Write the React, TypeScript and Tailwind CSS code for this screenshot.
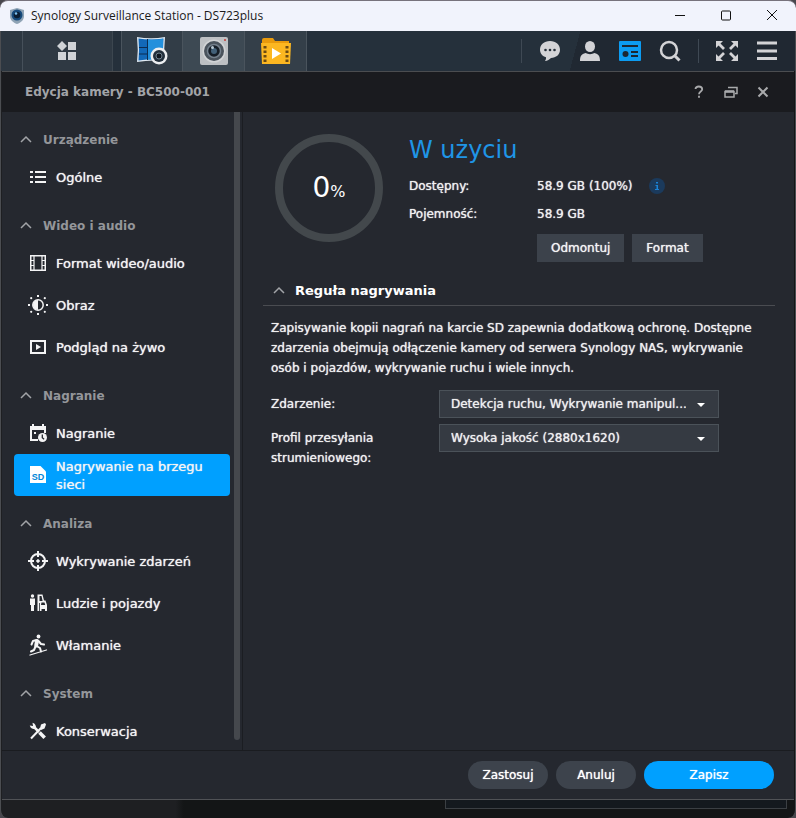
import React from "react";

type IconProps = { className?: string };

const svgProps = { width: 24, height: 24, viewBox: "0 0 24 24", fill: "none", "aria-hidden": true } as const;

function ListIcon() {
  return (
    <svg {...svgProps} fill="currentColor">
      <path d="M4 6h3v2H4zM4 11h3v2H4zM4 16h3v2H4zM9 6h11v2H9zM9 11h11v2H9zM9 16h11v2H9z" />
    </svg>
  );
}

function FilmIcon() {
  return (
    <svg {...svgProps} stroke="currentColor">
      <path d="M4.750 4.750h14.500v14.500H4.750z" strokeWidth="1.500" />
      <path d="M8 5v14M16 5v14M5 9.500h3M5 14.500h3M16 9.500h3M16 14.500h3" strokeWidth="1.200" />
    </svg>
  );
}

function BrightnessIcon() {
  return (
    <svg {...svgProps} fill="currentColor">
      <circle cx="12" cy="12" r="5.200" fill="none" stroke="currentColor" strokeWidth="1.500" />
      <path d="M12 7a5 5 0 0 0 0 10z" />
      <path d="M11 2h2v2h-2zM11 20h2v2h-2zM2 11h2v2H2zM20 11h2v2h-2z" />
      <circle cx="5.200" cy="5.200" r="1.100" />
      <circle cx="18.800" cy="5.200" r="1.100" />
      <circle cx="5.200" cy="18.800" r="1.100" />
      <circle cx="18.800" cy="18.800" r="1.100" />
    </svg>
  );
}

function LiveIcon() {
  return (
    <svg {...svgProps}>
      <path d="M5 6h14v12H5z" stroke="currentColor" strokeWidth="2" />
      <path d="M10 9l5 3-5 3z" fill="currentColor" />
    </svg>
  );
}

function CalendarIcon() {
  return (
    <svg {...svgProps}>
      <path d="M6 3h2v2h8V3h2v2h2v7h-2V9H6v9h6v2H4V5h2z" fill="currentColor" />
      <path d="M8 11h2v2H8z" fill="currentColor" />
      <circle cx="16.500" cy="16.500" r="4.500" fill="currentColor" />
      <path d="M16.300 13.500v3.200l1.800 1.600" stroke="#25282f" strokeWidth="1.300" />
    </svg>
  );
}

function SdIcon() {
  return (
    <svg {...svgProps}>
      <path d="M4 3h10.500L20 8.500V20H4z" fill="#fff" />
      <text x="12" y="17" textAnchor="middle" fontSize="9" fontWeight="700" fill="#0086d8" fontFamily="'Liberation Sans', sans-serif">
        SD
      </text>
    </svg>
  );
}

function TargetIcon() {
  return (
    <svg {...svgProps} stroke="currentColor" strokeWidth="2">
      <circle cx="12" cy="12" r="7" />
      <path d="M12 2v6M12 16v6M2 12h6M16 12h6" />
      <circle cx="12" cy="12" r="1.300" fill="currentColor" strokeWidth="1" />
    </svg>
  );
}

function PeopleIcon() {
  return (
    <svg {...svgProps} fill="currentColor">
      <circle cx="6.500" cy="5" r="1.700" />
      <path d="M4 7.500h5V14H8v6H5v-6H4z" />
      <path d="M11.500 20V3.500h5l1.500 6h-1.500l-1-4.500h-2v5h3v-.500h3l1.500 4.500v6h-2v-2h-3.500v2h-1.500v-8h-.800v8z" />
      <path d="M15.500 11.500h3l.700 2.500h-4.200z" fill="#25282f" />
    </svg>
  );
}

function IntrusionIcon() {
  return (
    <svg {...svgProps} stroke="currentColor" strokeLinecap="round" strokeLinejoin="round">
      <circle cx="12.500" cy="3.500" r="1.900" fill="currentColor" stroke="none" />
      <path d="M11 8l-.800 4.500" strokeWidth="4" />
      <path d="M10.500 7L7 8l-1.500 3.500M12.500 8l2.500 3 3 .500M10.500 13l3.500 2 1 3.500M9.500 13.500L8 17l-3 1.500" strokeWidth="2" />
      <path d="M4 22L20.500 17" strokeWidth="1.300" />
    </svg>
  );
}

function ToolsIcon() {
  return (
    <svg {...svgProps} stroke="currentColor">
      <path d="M5 19.500L15 9" strokeWidth="2" />
      <path d="M14 9.500l1-4L19 4l1 1.500-1.500 4L15 11z" fill="currentColor" stroke="none" />
      <path d="M8 8l5 5" strokeWidth="2.500" />
      <path d="M6.500 3.800l.500 3.200-3.200-.500A4 4 0 0 0 9.500 9.500 4 4 0 0 0 6.500 3.800z" fill="currentColor" stroke="none" />
      <path d="M13.500 13.500l5.200 5.200" strokeWidth="3.500" />
    </svg>
  );
}

function Chevron({ className }: IconProps) {
  return (
    <svg className={className} width="12" height="12" viewBox="0 0 12 12" fill="none" aria-hidden>
      <path d="M1 8l5-5 5 5" stroke="#a2a4a8" strokeWidth="1.500" />
    </svg>
  );
}

type Item = { label: string; icon: () => React.JSX.Element; active?: boolean };

const groups: { title: string; items: Item[] }[] = [
  { title: "Urządzenie", items: [{ label: "Ogólne", icon: ListIcon }] },
  {
    title: "Wideo i audio",
    items: [
      { label: "Format wideo/audio", icon: FilmIcon },
      { label: "Obraz", icon: BrightnessIcon },
      { label: "Podgląd na żywo", icon: LiveIcon },
    ],
  },
  {
    title: "Nagranie",
    items: [
      { label: "Nagranie", icon: CalendarIcon },
      { label: "Nagrywanie na brzegu sieci", icon: SdIcon, active: true },
    ],
  },
  {
    title: "Analiza",
    items: [
      { label: "Wykrywanie zdarzeń", icon: TargetIcon },
      { label: "Ludzie i pojazdy", icon: PeopleIcon },
      { label: "Włamanie", icon: IntrusionIcon },
    ],
  },
  { title: "System", items: [{ label: "Konserwacja", icon: ToolsIcon }] },
];

function WindowTitle() {
  const btn = "grid h-[30px] w-[46px] place-items-center";
  return (
    <header className="flex h-[31px] shrink-0 items-center rounded-t-lg border-t border-[#77727c] bg-[#f1f3fc] pr-px pl-2.5 font-['Open_Sans','Noto_Sans',sans-serif] text-xs text-[#1a1a1a]">
      <svg width="14" height="16" viewBox="0 0 14 16" aria-hidden>
        <path d="M7 0l7 2v6c0 4-3 6.500-7 8-4-1.500-7-4-7-8V2z" fill="#8fa3b5" />
        <circle cx="7" cy="7" r="5.500" fill="#174a7c" />
        <circle cx="7" cy="7" r="3.300" fill="#0b1d33" />
        <circle cx="6" cy="5.500" r="1.300" fill="#7cc0f0" />
      </svg>
      <h1 className="ml-[7px] flex-1">Synology Surveillance Station - DS723plus</h1>
      <div className="flex">
        <button type="button" aria-label="Minimalizuj" className={btn}>
          <svg width="12" height="12" viewBox="0 0 12 12"><path d="M1 5.500h10" stroke="#111" /></svg>
        </button>
        <button type="button" aria-label="Maksymalizuj" className={btn}>
          <svg width="12" height="12" viewBox="0 0 12 12"><rect x="1.500" y="1" width="9" height="9" rx="1" fill="none" stroke="#111" /></svg>
        </button>
        <button type="button" aria-label="Zamknij okno" className={btn}>
          <svg width="12" height="12" viewBox="0 0 12 12"><path d="M1 0l10 10M11 0L1 10" stroke="#111" /></svg>
        </button>
      </div>
    </header>
  );
}

function AppBar() {
  const right = "grid h-10 w-10 place-items-center";
  const app = "grid h-10 place-items-center border-r border-[#4a545d]";
  return (
    <div className="flex h-10 shrink-0 items-center bg-[linear-gradient(105deg,#25303b_72%,#202832_72%)]">
      <div className="h-10 w-[22px] border-r border-[#46505a] bg-[#2d3741]" />
      <button type="button" aria-label="Menu główne" className="mr-2 grid h-10 w-[90px] place-items-center border-r border-[#3c464f] bg-[#2f3943] pr-0.5">
        <svg width="20" height="20" viewBox="0 0 20 20" fill="#d0d3d7" aria-hidden>
          <path d="M5 0l5 5-5 5-5-5zM11 1h8v8h-8zM1 11h8v8H1zM11 11h8v8h-8z" />
        </svg>
      </button>
      <button type="button" aria-label="Centrum monitoringu" className={`${app} w-[62px] border-l bg-[#323d47]`}>
        <svg width="32" height="28" viewBox="0 0 32 28" aria-hidden>
          <path d="M1 0q14 2.500 28 0-1.500 12 0 24-14-1.500-28 1 1.500-12 0-25z" fill="#dfe9f2" />
          <path d="M2.500 1.500q12.500 2 25 0-1 10.500 0 21-12.500-1-25 1 1-11 0-22z" fill="#1268b8" />
          <path d="M12 2.500q8 .500 15-.800v20.500l-15 .300z" fill="#2390dc" />
          <path d="M11.500 2v21M3 10.500h8.500M3 17h8.500" stroke="#0b2c52" />
          <circle cx="23" cy="19" r="8.500" fill="#eceef0" />
          <circle cx="23" cy="19" r="6" fill="#23303c" />
          <circle cx="23" cy="19" r="3" fill="#0e161f" stroke="#70808c" />
        </svg>
      </button>
      <button type="button" aria-label="Kamera IP" className={`${app} w-[62px] bg-[#3d4953]`}>
        <svg width="28" height="30" viewBox="0 0 28 30" aria-hidden>
          <rect x="0" y="1" width="28" height="28" rx="2" fill="#bdc0c3" />
          <circle cx="14" cy="15" r="11.500" fill="#d2d4d6" />
          <circle cx="14" cy="15" r="10" fill="#4a535c" />
          <circle cx="14" cy="15" r="6.500" fill="#151d26" stroke="#74808c" strokeWidth="1.500" />
          <circle cx="14" cy="15" r="3" fill="#426078" />
          <circle cx="12.500" cy="11.500" r="1.500" fill="#b8c8d4" />
          <circle cx="25" cy="4" r="1" fill="#c43a35" />
        </svg>
      </button>
      <button type="button" aria-label="Nagrania" className={`${app} w-[62px] bg-[#343f49]`}>
        <svg width="30" height="28" viewBox="0 0 30 28" aria-hidden>
          <path d="M1 3q0-2 2-2h9l2 3h14v5H1z" fill="#e99a0c" />
          <path d="M0 6h30l-1 21H1z" fill="#fcb721" />
          <path d="M4 9v17M26 9v17" stroke="#6b4a12" strokeWidth="3" strokeDasharray="2.500 2" />
          <path d="M11 11l9 5.500-9 5.500z" fill="#fff" />
        </svg>
      </button>
      <div className="ml-auto flex items-center pr-2">
        <div className="mr-2 h-6 w-px bg-[#3f4954]" />
        <button type="button" aria-label="Czat" className={right}>
          <svg width="20" height="20" viewBox="0 0 20 20" aria-hidden>
            <path d="M10 0c6 0 10 3.800 10 8.700 0 5-4 8-9 8.300-1.500 1.600-3.500 2.800-6 3 .8-1 1.200-2.500 1-3.700C2.500 15 0 12.500 0 8.700 0 3.800 4 0 10 0z" fill="#d3d3d6" />
            <circle cx="5.500" cy="9" r="1.300" fill="#26303a" /><circle cx="10" cy="9" r="1.300" fill="#26303a" /><circle cx="14.500" cy="9" r="1.300" fill="#26303a" />
          </svg>
        </button>
        <button type="button" aria-label="Użytkownik" className={right}>
          <svg width="20" height="20" viewBox="0 0 20 20" fill="#d3d3d6" aria-hidden>
            <ellipse cx="10" cy="5.500" rx="5" ry="5.500" />
            <path d="M0 20c0-5 1.500-7 5.500-8 2.500 1.500 6.500 1.500 9 0 4 1 5.500 3 5.500 8z" />
          </svg>
        </button>
        <button type="button" aria-label="Widżety" className={right}>
          <svg width="22" height="20" viewBox="0 0 22 20" aria-hidden>
            <rect width="22" height="20" rx="1" fill="#0c9cf2" />
            <path d="M3 5h16M12 11h7M12 15h7" stroke="#1b2733" strokeWidth="2" />
            <circle cx="6.500" cy="13" r="3" fill="#1b2733" />
          </svg>
        </button>
        <button type="button" aria-label="Szukaj" className={right}>
          <svg width="22" height="22" viewBox="0 0 22 22" fill="none" stroke="#d3d3d6" aria-hidden>
            <circle cx="10" cy="10" r="8" strokeWidth="2.500" />
            <path d="M15.500 15.500l5 5" strokeWidth="3" />
          </svg>
        </button>
        <div className="mx-2 h-6 w-px bg-[#3f4954]" />
        <button type="button" aria-label="Pełny ekran" className={right}>
          <svg width="22" height="20" viewBox="0 0 22 20" aria-hidden>
            <g fill="#d3d3d6">
              <path d="M0 0h7L0 7zM22 0h-7l7 7zM0 20h7l-7-7zM22 20h-7l7-7z" />
            </g>
            <path d="M2 2l6 6M20 2l-6 6M2 18l6-6M20 18l-6-6" stroke="#d3d3d6" strokeWidth="2.800" />
          </svg>
        </button>
        <button type="button" aria-label="Opcje" className={right}>
          <svg width="20" height="20" viewBox="0 0 20 20" aria-hidden>
            <path d="M0 2h20M0 10h20M0 17.500h20" stroke="#d3d3d6" strokeWidth="3" />
          </svg>
        </button>
      </div>
    </div>
  );
}

function DialogHeader() {
  const btn = "grid h-8 w-8 place-items-center text-[#a9aaac]";
  return (
    <div className="flex h-10 shrink-0 items-center bg-[#1a1b1f] pr-[15px] pl-[23px]">
      <h2 className="flex-1 text-xs font-bold text-[#a2a4a8]">Edycja kamery - BC500-001</h2>
      <button type="button" aria-label="Pomoc" className={btn}>
        <svg width="10" height="14" viewBox="0 0 10 14" fill="none" stroke="currentColor" strokeWidth="1.800" aria-hidden>
          <path d="M1.500 4Q1.500 1.500 4.800 1.500T8.200 4.200C8.200 6.500 5 6.500 5 9.200M5 10.800v2" />
        </svg>
      </button>
      <button type="button" aria-label="Przywróć" className={btn}>
        <svg width="14" height="12" viewBox="0 0 14 12" fill="none" stroke="currentColor" aria-hidden>
          <path d="M4 1.500h9v6h-2" strokeWidth="1.500" />
          <path d="M1 5.500h9v5.500H1z" strokeWidth="1.500" />
          <path d="M1 5.500h9" strokeWidth="2.500" />
        </svg>
      </button>
      <button type="button" aria-label="Zamknij" className={btn}>
        <svg width="12" height="12" viewBox="0 0 12 12" aria-hidden>
          <path d="M1.500 1.500l9 9M10.500 1.500l-9 9" stroke="currentColor" strokeWidth="2" />
        </svg>
      </button>
    </div>
  );
}

function Sidebar() {
  return (
    <div className="flex w-[241px] shrink-0 border-r border-[#1b1d22] pr-0.5">
      <nav className="min-w-0 flex-1 overflow-y-auto pr-1 pl-3 [scrollbar-width:none]">
        {groups.map((group) => (
          <section key={group.title}>
            <h3 className="flex h-11 items-center pt-3 pl-1.5 text-xs font-bold text-[#94969a]">
              <Chevron className="mr-[11px]" />
              {group.title}
            </h3>
            <ul>
              {group.items.map(({ label, icon: Icon, active }) => (
                <li key={label}>
                  <a
                    href="#"
                    aria-current={active ? "page" : undefined}
                    className={`flex h-[42px] items-center gap-1.5 rounded-sm pl-3 text-[13px] leading-[18px] text-[#f4f4f5] ${active ? "bg-[#00a0ff]" : ""}`}
                  >
                    <span className="shrink-0"><Icon /></span>
                    <span className="pt-0.5 [text-shadow:0_0_1px_currentColor]">{label}</span>
                  </a>
                </li>
              ))}
            </ul>
          </section>
        ))}
      </nav>
      <div className="mb-2.5 w-1.5 rounded-b-full bg-[#45484d]" />
    </div>
  );
}

function SelectField({ id, label, options }: { id: string; label: string; options: string[] }) {
  return (
    <div className="flex items-start">
      <label htmlFor={id} className="w-[168px] shrink-0 pt-1 pr-12">{label}</label>
      <div className="relative w-[280px]">
        <select id={id} className="h-7 w-full appearance-none rounded-none border border-[#4b5259] bg-[#353a42] pr-8 pl-[11px] text-xs text-[#f0f0f1] [text-shadow:inherit]">
          {options.map((o) => <option key={o}>{o}</option>)}
        </select>
        <svg className="pointer-events-none absolute top-3 right-3.5" width="8" height="5" viewBox="0 0 8 5" aria-hidden>
          <path d="M0 1h8L4 5z" fill="#fff" />
        </svg>
      </div>
    </div>
  );
}

function Content() {
  const btn = "h-7 bg-[#3c424b] px-3.5 text-[#f4f4f5] [text-shadow:inherit]";
  return (
    <main className="min-w-0 flex-1 overflow-hidden pr-[19px] pl-5 text-xs leading-5 text-[#f0f0f1] [text-shadow:0_0_1px_currentColor]">
      <section className="flex gap-[26px] pt-[22px] pl-3">
        <div className="grid size-[108px] place-items-center rounded-full border-8 border-[#43484c]">
          <p className="pt-1.5 text-[28px] text-white [text-shadow:none]">0<span className="text-base">%</span></p>
        </div>
        <div>
          <h2 className="mb-2.5 text-2xl leading-8 text-[#1f95e6] [text-shadow:none]">W użyciu</h2>
          <dl className="grid grid-cols-[128px_auto] gap-y-2">
            <dt>Dostępny:</dt>
            <dd className="flex items-center gap-4">
              58.9 GB (100%)
              <svg width="16" height="16" viewBox="0 0 16 16" aria-hidden>
                <circle cx="8" cy="8" r="8" fill="#1b3a5c" />
                <path d="M7 4h2v1.500H7zM6.500 7H9v4h1v1H6v-1h1.500V8h-1z" fill="#1a83d8" />
              </svg>
            </dd>
            <dt>Pojemność:</dt>
            <dd>58.9 GB</dd>
          </dl>
          <div className="mt-2.5 ml-32 flex gap-2">
            <button type="button" className={btn}>Odmontuj</button>
            <button type="button" className={btn}>Format</button>
          </div>
        </div>
      </section>
      <section className="mt-3">
        <h3 className="flex h-8 items-center border-b border-[#4a4c51] pt-0.5 pl-2.5 text-[13px] font-bold text-white [text-shadow:none]">
          <Chevron className="mr-2.5" />
          Reguła nagrywania
        </h3>
        <div className="px-2 pt-3">
          <p>
            Zapisywanie kopii nagrań na karcie SD zapewnia dodatkową ochronę. Dostępne zdarzenia obejmują odłączenie kamery od serwera Synology NAS, wykrywanie osób i pojazdów, wykrywanie ruchu i wiele innych.
          </p>
          <div className="mt-3 flex flex-col gap-1.5">
            <SelectField id="event" label="Zdarzenie:" options={["Detekcja ruchu, Wykrywanie manipul..."]} />
            <SelectField id="profile" label="Profil przesyłania strumieniowego:" options={["Wysoka jakość (2880x1620)"]} />
          </div>
        </div>
      </section>
    </main>
  );
}

function Footer() {
  const pill = "h-7 rounded-full text-xs text-white [text-shadow:0_0_1px_currentColor]";
  return (
    <footer className="flex h-[50px] shrink-0 items-center justify-end gap-2 border-t border-b border-t-[#1a1c20] border-b-[#505256] pr-5">
      <button type="button" className={`${pill} w-20 bg-[#3d434c]`}>Zastosuj</button>
      <button type="button" className={`${pill} w-20 bg-[#3d434c]`}>Anuluj</button>
      <button type="button" className={`${pill} w-[130px] bg-[#00a0ff]`}>Zapisz</button>
    </footer>
  );
}

export default function App() {
  return (
    <div className="flex h-screen flex-col overflow-hidden bg-[#48474d] font-[Verdana,'DejaVu_Sans',sans-serif]">
      <WindowTitle />
      <div className="flex min-h-0 flex-1 flex-col rounded-b-lg border-r border-l border-[#4b4d51] bg-[linear-gradient(to_right,#1e1f22_22%,#131516_23%)]">
        <AppBar />
        <div className="mx-px flex min-h-0 flex-1 flex-col border-t border-[#4b4d50] bg-[#25282f]">
          <DialogHeader />
          <div className="flex min-h-0 flex-1">
            <Sidebar />
            <Content />
          </div>
          <Footer />
        </div>
        <div className="flex h-[18px] shrink-0 justify-end pr-2">
          <div className="h-[9px] w-[342px] border border-t-0 border-[#3b3f43] bg-[#14191e]" />
        </div>
      </div>
    </div>
  );
}
